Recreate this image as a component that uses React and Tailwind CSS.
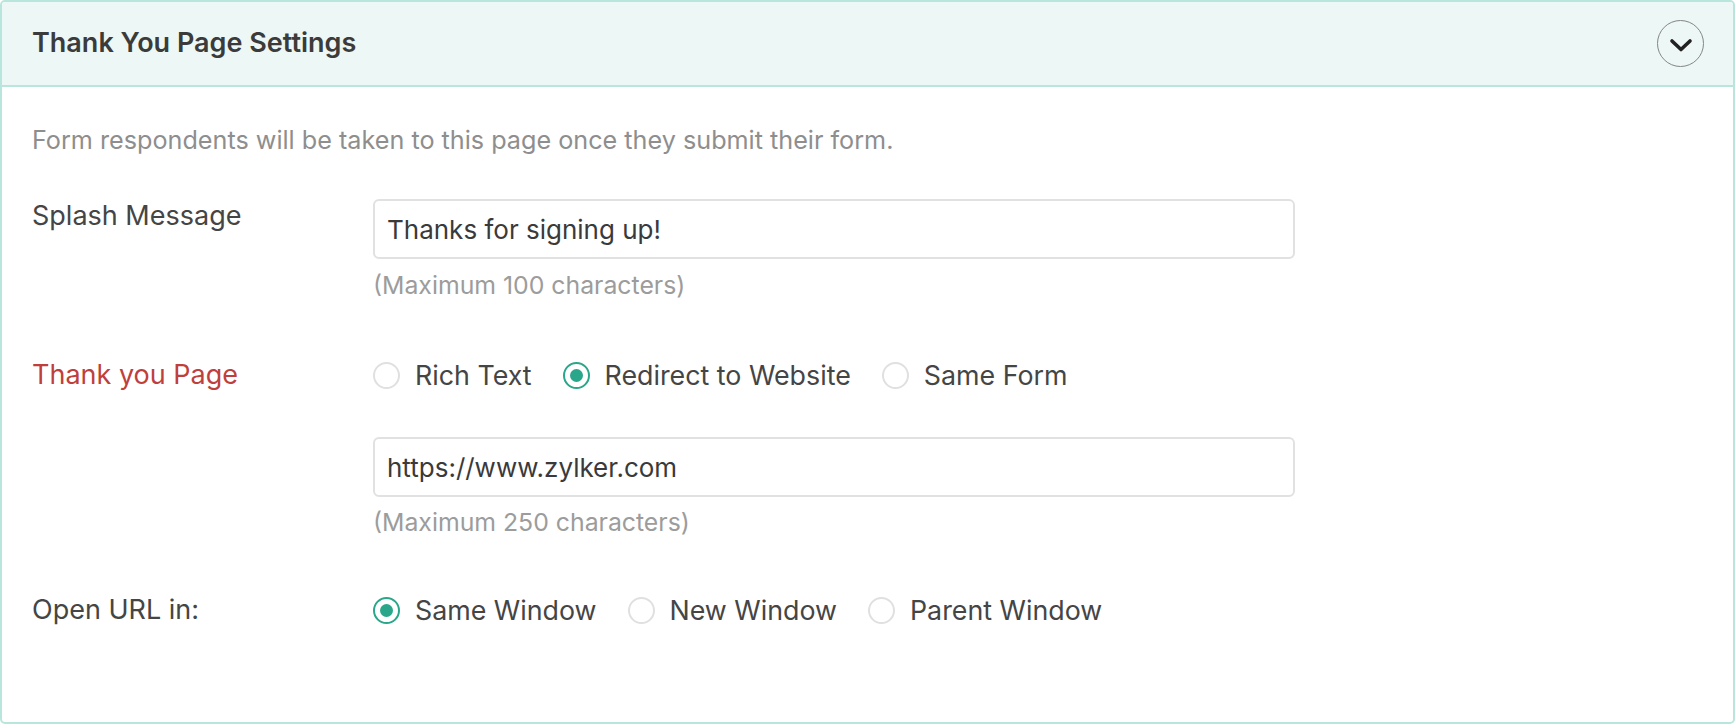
import React, { useState } from "react";

const font = { fontFamily: "Inter, 'Open Sans', sans-serif" };

const Radio = ({ checked, label, onClick }) => (
  <button type="button" onClick={onClick} className="flex items-center gap-[15px] mr-[31px]">
    <span
      className={
        checked
          ? "w-[27px] h-[27px] rounded-full border-2 border-[#2aa68a] flex items-center justify-center"
          : "w-[27px] h-[27px] rounded-full border-2 border-[#e0e0e0]"
      }
    >
      {checked && <span className="w-[13px] h-[13px] rounded-full bg-[#2aa68a]" />}
    </span>
    <span className="text-[26.8px] leading-[36px] text-[#454545]">{label}</span>
  </button>
);

const TextBox = ({ value }) => (
  <div className="w-[922px] h-[60px] border-2 border-[#e1e1e1] rounded-[6px] flex items-center px-[12px] text-[26px] text-[#3a3a3a]">
    {value}
  </div>
);

export default function App() {
  const [page, setPage] = useState("redirect");
  const [target, setTarget] = useState("same");

  return (
    <div className="w-[1735px] h-[724px] bg-white" style={font}>
      <div className="h-full border-2 border-[#b9e6dc] rounded-[5px] overflow-hidden">
        {/* Header */}
        <div className="h-[85px] bg-[#edf7f5] border-b-2 border-[#b9e6dc] flex items-center justify-between pl-[30px] pr-[29px]">
          <h2 className="text-[27px] font-semibold text-[#3b3b3b]">Thank You Page Settings</h2>
          <button className="w-[47px] h-[47px] rounded-full border-[1.5px] border-[#858585] flex items-center justify-center">
            <svg width="26" height="16" viewBox="0 0 26 16" fill="none" className="mt-[2px]">
              <path d="M4 4l9 8.5L22 4" stroke="#222" strokeWidth="3.6" strokeLinecap="round" strokeLinejoin="round" />
            </svg>
          </button>
        </div>

        {/* Body */}
        <div className="pl-[30px]">
          <p className="mt-[37px] text-[25.2px] leading-[32px] text-[#8e8e8e]">
            Form respondents will be taken to this page once they submit their form.
          </p>

          <div className="flex mt-[37px]">
            <div className="w-[341px] mt-[5px] text-[27px] leading-[36px] text-[#454545]">Splash Message</div>
            <div className="mt-[6px]">
              <TextBox value="Thanks for signing up!" />
              <p className="mt-[10px] text-[24.8px] leading-[32px] text-[#9c9c9c]">(Maximum 100 characters)</p>
            </div>
          </div>

          <div className="flex items-center mt-[56px]">
            <div className="w-[341px] text-[27px] leading-[36px] text-[#bf3f3c]">Thank you Page</div>
            <Radio label="Rich Text" checked={page === "rich"} onClick={() => setPage("rich")} />
            <Radio label="Redirect to Website" checked={page === "redirect"} onClick={() => setPage("redirect")} />
            <Radio label="Same Form" checked={page === "same"} onClick={() => setPage("same")} />
          </div>

          <div className="ml-[341px] mt-[44px]">
            <TextBox value="https://www.zylker.com" />
            <p className="mt-[9px] text-[24.8px] leading-[32px] text-[#9c9c9c]">(Maximum 250 characters)</p>
          </div>

          <div className="flex items-center mt-[54px]">
            <div className="w-[341px] text-[27px] leading-[36px] text-[#454545]">Open URL in:</div>
            <Radio label="Same Window" checked={target === "same"} onClick={() => setTarget("same")} />
            <Radio label="New Window" checked={target === "new"} onClick={() => setTarget("new")} />
            <Radio label="Parent Window" checked={target === "parent"} onClick={() => setTarget("parent")} />
          </div>
        </div>
      </div>
    </div>
  );
}
